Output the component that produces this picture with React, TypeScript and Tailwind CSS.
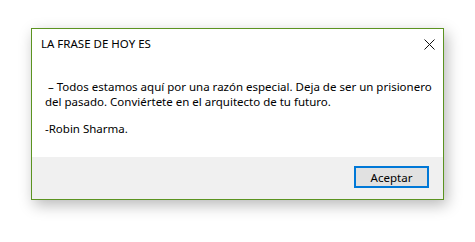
import React from 'react'

const font = { fontFamily: '"Noto Sans", "Open Sans", sans-serif' }

export default function App() {
  return (
    <div className="min-h-[242px] bg-white pt-[28px] pl-[31px]" style={font}>
      <div className="w-[413px] h-[172px] border border-[#5b9320] bg-white flex flex-col shadow-[3px_5px_14px_rgba(0,0,0,0.28)]">
        {/* Title bar */}
        <div className="flex items-start justify-between h-[40px] pl-[9px] pr-[8px] pt-[7px]">
          <span className="text-[11.5px] leading-[15px] text-black">LA FRASE DE HOY ES</span>
          <button className="mt-[2px] w-[12px] h-[12px] flex items-center justify-center" aria-label="Cerrar">
            <svg width="11" height="11" viewBox="0 0 11 11" fill="none" stroke="#111" strokeWidth="1">
              <path d="M0.5 0.5 L10.5 10.5 M10.5 0.5 L0.5 10.5" />
            </svg>
          </button>
        </div>

        {/* Message */}
        <div className="flex-1 pl-[13px] pr-[8px] pt-[10px] text-[11.5px] leading-[15px] text-black">
          <p>&nbsp;– Todos estamos aquí por una razón especial. Deja de ser un prisionero del pasado. Conviértete en el arquitecto de tu futuro.</p>
          <p className="mt-[12px]">-Robin Sharma.</p>
        </div>

        {/* Footer */}
        <div className="h-[42px] bg-[#f0f0f0] flex items-end justify-end pr-[14px] pb-[11px]">
          <button className="w-[75px] h-[22px] border-2 border-[#0078d7] bg-[#e1e1e1] text-[11.5px] leading-[15px] text-black">
            Aceptar
          </button>
        </div>
      </div>
    </div>
  )
}
